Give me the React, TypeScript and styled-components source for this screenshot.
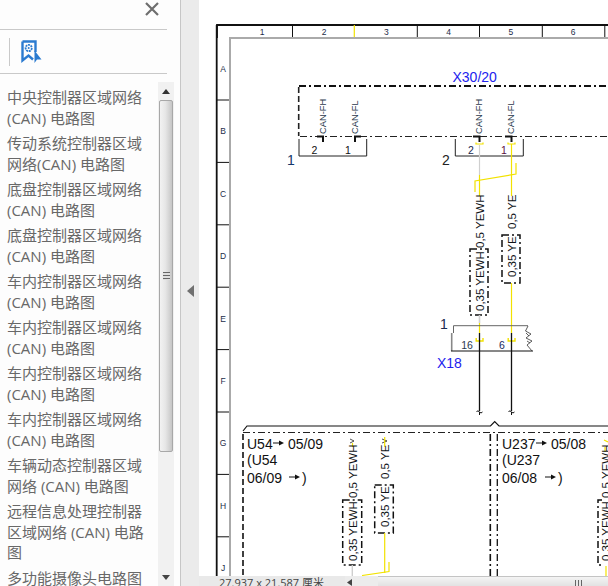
import React from "react";
import styled, { createGlobalStyle } from "styled-components";

const Global = createGlobalStyle`
  html, body { margin: 0; padding: 0; height: 100%; background: #fff; overflow: hidden; }
  #root { height: 100%; }
`;

const Shell = styled.div`
  display: flex;
  width: 608px;
  height: 586px;
  overflow: hidden;
  font-family: "Open Sans", "Noto Sans CJK SC", sans-serif;
`;

const Sidebar = styled.aside`
  width: 180px;
  flex: none;
  display: flex;
  flex-direction: column;
  background: #fdfdfd;
  border-right: 1px solid #c6c6c6;
`;

const CloseRow = styled.div`
  height: 30px;
  width: 167px;
  flex: none;
  box-sizing: border-box;
  border-bottom: 1px solid #c9c9c9;
  display: flex;
  justify-content: flex-end;
  align-items: flex-start;
  padding: 1px 8px 0 0;
  svg { margin-right: -1px; }
`;

const ToolRow = styled.div`
  height: 44px;
  width: 167px;
  flex: none;
  box-sizing: border-box;
  border-bottom: 1px solid #c9c9c9;
  display: flex;
  align-items: center;
  padding: 0 0 0 9px;
`;

const ToolDivider = styled.span`
  width: 1px;
  height: 28px;
  background: #c9c9c9;
  margin-right: 11px;
`;

const ListArea = styled.div`
  flex: 1;
  min-height: 0;
  display: flex;
  padding: 8px 6px 0 0;
`;

const List = styled.ul`
  list-style: none;
  margin: 0;
  padding: 5px 0 0 7px;
  width: 158px;
  flex: none;
  box-sizing: border-box;
  overflow: hidden;
`;

const Item = styled.li`
  font-size: 15px;
  line-height: 20.5px;
  color: #686868;
  margin-bottom: 5px;
  width: 145px;
`;

const ScrollTrack = styled.div`
  width: 16px;
  flex: none;
  background: #f1f1f1;
  display: flex;
  flex-direction: column;
  align-items: center;
`;

const ScrollCap = styled.div`
  height: 18px;
  flex: none;
  display: flex;
  align-items: center;
  justify-content: center;
`;

const ScrollThumb = styled.div`
  width: 14px;
  box-sizing: border-box;
  height: 352px;
  flex: none;
  border: 1px solid #a8a8a8;
  border-radius: 2px;
  background: linear-gradient(90deg, #f2f2f2 0%, #e6e6e6 45%, #c6c6c6 100%);
  display: flex;
  align-items: center;
  justify-content: center;
  margin-bottom: auto;
`;

const Grip = styled.span`
  width: 7px;
  height: 8px;
  background: repeating-linear-gradient(180deg, #666 0 1px, #ddd 1px 3px);
`;

const Gutter = styled.div`
  width: 18px;
  flex: none;
  background: #ebebeb;
  display: flex;
  align-items: center;
  justify-content: center;
  padding-bottom: 5px;
  box-sizing: border-box;
`;

const Viewer = styled.main`
  flex: 1;
  min-width: 0;
  display: flex;
  flex-direction: column;
`;

const Sheet = styled.svg`
  display: block;
  width: 409px;
  height: 576px;
  flex: none;
  background: #fff;
  font-family: "Liberation Sans", sans-serif;
`;

const StatusBar = styled.div`
  height: 10px;
  flex: none;
  display: flex;
  background: #e9e9e9;
  overflow: hidden;
`;

const Size = styled.span`
  width: 146px;
  flex: none;
  padding: 0 0 0 20px;
  box-sizing: border-box;
  font-size: 11px;
  line-height: 13px;
  color: #444;
  white-space: nowrap;
`;

const HBar = styled.div`
  flex: 1;
  display: flex;
  align-items: flex-start;
`;

const HArrow = styled.span`
  width: 33px;
  height: 10px;
  flex: none;
  background: #ececec;
  padding: 3px 0 0 2px;
  box-sizing: border-box;
  svg { display: block; }
`;

const HThumb = styled.div`
  flex: 1;
  height: 10px;
  box-sizing: border-box;
  border-top: 1px solid #c4c4c4;
  background: linear-gradient(180deg, #f4f4f4, #e2e2e2);
  display: flex;
  justify-content: flex-end;
  padding: 3px 26px 0 0;
`;

const HGrip = styled.span`
  width: 7px;
  height: 7px;
  background: repeating-linear-gradient(90deg, #666 0 1px, #e8e8e8 1px 3px);
`;

const Tick = styled.text`
  font-size: 8.5px;
  fill: #1c2c48;
  text-anchor: middle;
`;

const PinNo = styled.text<{ $c?: string }>`
  font-size: 10.5px;
  fill: ${(p) => p.$c ?? "#111"};
  text-anchor: middle;
`;

const BigNo = styled.text<{ $c?: string }>`
  font-size: 14px;
  fill: ${(p) => p.$c ?? "#14386a"};
  text-anchor: middle;
`;

const Tag = styled.text`
  font-size: 14px;
  fill: #2222ee;
`;

const Ref = styled.text`
  font-size: 14px;
  fill: #111;
`;

const Signal = styled.text`
  font-size: 9.3px;
  fill: #2c3a4e;
`;

const Wire = styled.text`
  font-size: 11.5px;
  fill: #101418;
`;

const sidebarItems = [
  "中央控制器区域网络 (CAN) 电路图",
  "传动系统控制器区域网络(CAN) 电路图",
  "底盘控制器区域网络 (CAN) 电路图",
  "底盘控制器区域网络 (CAN) 电路图",
  "车内控制器区域网络 (CAN) 电路图",
  "车内控制器区域网络 (CAN) 电路图",
  "车内控制器区域网络 (CAN) 电路图",
  "车内控制器区域网络 (CAN) 电路图",
  "车辆动态控制器区域网络 (CAN) 电路图",
  "远程信息处理控制器区域网络 (CAN) 电路图",
  "多功能摄像头电路图",
];

const columns = ["1", "2", "3", "4", "5", "6"];
const rows = ["A", "B", "C", "D", "E", "F", "G", "H", "J"];
const DD = "7 3 2 3";

const RotLabel = ({ x, y, text, small }: { x: number; y: number; text: string; small?: boolean }) =>
  small ? (
    <Signal transform={`translate(${x} ${y}) rotate(-90)`}>{text}</Signal>
  ) : (
    <Wire transform={`translate(${x} ${y}) rotate(-90)`}>{text}</Wire>
  );

const WireBox = ({ x, y, w, h }: { x: number; y: number; w: number; h: number }) => (
  <rect x={x} y={y} width={w} height={h} fill="#fff" stroke="#111" strokeWidth="1.5" strokeDasharray={DD} />
);

const Arrow = ({ x, y }: { x: number; y: number }) => (
  <g>
    <line x1={x} y1={y} x2={x + 8} y2={y} stroke="#111" strokeWidth="1" />
    <path d={`M${x + 6} ${y - 2.5}L${x + 11} ${y}L${x + 6} ${y + 2.5}Z`} fill="#111" />
  </g>
);

const Drawing = () => (
  <Sheet viewBox="199 0 409 576">
    {/* frame */}
    <path d="M217 38V25H608" fill="none" stroke="#111" strokeWidth="1.8" />
    <line x1="216.7" y1="25" x2="216.7" y2="576" stroke="#111" strokeWidth="1.8" />
    <path d="M230 576V38H608" fill="none" stroke="#aaa" strokeWidth="2" />
    {[292.5, 417.3, 479.5, 542.3, 604.8].map((x) => (
      <line key={x} x1={x} y1="25" x2={x} y2="37" stroke="#111" />
    ))}
    <line x1="354.3" y1="25" x2="354.3" y2="37" stroke="#f2e200" strokeWidth="1.2" />
    {columns.map((c, i) => (
      <Tick key={c} x={262 + i * 62.2} y="35">{c}</Tick>
    ))}
    {[100, 162.4, 224.8, 287.2, 349.6, 412, 474.4, 536.8].map((y) => (
      <line key={y} x1="217" y1={y} x2="229" y2={y} stroke="#111" />
    ))}
    {rows.map((r, i) => (
      <Tick key={r} x="223" y={72 + i * 62.4}>{r}</Tick>
    ))}

    {/* X30/20 module */}
    <Tag x="452.5" y="82">X30/20</Tag>
    <line x1="299" y1="86" x2="608" y2="86" stroke="#111" strokeWidth="2" strokeDasharray={DD} />
    <line x1="298.7" y1="87" x2="298.7" y2="136" stroke="#222" strokeWidth="1.6" strokeDasharray="6 3" />
    <line x1="300" y1="136.5" x2="608" y2="136.5" stroke="#222" strokeWidth="1.2" strokeDasharray={DD} />
    <RotLabel x={326} y={134} text="CAN-FH" small />
    <RotLabel x={358} y={134} text="CAN-FL" small />
    <RotLabel x={482} y={134} text="CAN-FH" small />
    <RotLabel x={514} y={134} text="CAN-FL" small />
    <path d="M299 139V156H366.7V139" fill="none" stroke="#222" strokeWidth="1" />
    <path d="M455.3 139V156H523.3V139" fill="none" stroke="#222" strokeWidth="1" />
    <path d="M317 136.5H323V142M355 142V136.5H361" fill="none" stroke="#111" strokeWidth="2" />
    <path d="M473 136.5H479.5V142M505 136.5H511.5V142" fill="none" stroke="#111" strokeWidth="2" />
    <PinNo x="314.5" y="154">2</PinNo>
    <PinNo x="348" y="154">1</PinNo>
    <PinNo x="471" y="154" $c="#1a2a50">2</PinNo>
    <PinNo x="504" y="154" $c="#5a1040">1</PinNo>
    <BigNo x="291" y="165">1</BigNo>
    <BigNo x="446" y="165" $c="#222">2</BigNo>

    {/* wires to X18 */}
    <path d="M476 142.5V144H483V142.5M508 142.5V144H515V142.5" fill="none" stroke="#f2e200" strokeWidth="1.2" />
    <line x1="479.5" y1="145" x2="479.5" y2="175" stroke="#cfcfcf" strokeWidth="1.2" />
    <line x1="479.5" y1="175" x2="479.5" y2="196" stroke="#f2e200" strokeWidth="1.2" />
    <line x1="511.5" y1="144" x2="511.5" y2="196" stroke="#f2e200" strokeWidth="1.2" />
    <path d="M516 163V174L475 181V192" fill="none" stroke="#f2e200" strokeWidth="1.2" />
    <RotLabel x={484} y={248} text="0,5 YEWH" />
    <RotLabel x={516} y={229} text="0,5 YE" />
    <WireBox x={470} y={249} w={18} h={66} />
    <WireBox x={502} y={235} w={18} h={48} />
    <RotLabel x={484} y={311} text="0,35 YEWH" />
    <RotLabel x={516} y={277} text="0,35 YE" />
    <line x1="479.5" y1="315" x2="479.5" y2="323" stroke="#cfcfcf" strokeWidth="1.6" />
    <line x1="479.5" y1="323" x2="479.5" y2="333" stroke="#f2e200" strokeWidth="1.2" />
    <line x1="511.5" y1="283" x2="511.5" y2="333" stroke="#f2e200" strokeWidth="1.2" />

    {/* X18 connector */}
    <path d="M453.5 333V325.7H528" fill="none" stroke="#666" strokeWidth="1" />
    <line x1="451.7" y1="333" x2="451.7" y2="351" stroke="#888" strokeWidth="1.6" />
    <line x1="451" y1="351" x2="533" y2="351" stroke="#111" strokeWidth="1" />
    <path
      d="M528 326L525.5 331L531 334L526 338L532 341L527 345L532 351M526 333L529 336M527 341L530 343"
      fill="none"
      stroke="#333"
      strokeWidth="0.8"
    />
    <BigNo x="444" y="329" $c="#1a2a50">1</BigNo>
    <PinNo x="467" y="349" $c="#2a3a50">16</PinNo>
    <PinNo x="502" y="349" $c="#1a2a60">6</PinNo>
    <Tag x="437" y="368">X18</Tag>
    <path d="M476.2 338V341H483V338M508.2 338V341H515V338" fill="none" stroke="#f2e200" strokeWidth="1.4" />
    <path d="M479.5 333V411M511.5 333V411" fill="none" stroke="#111" strokeWidth="1.3" />
    <path d="M476.5 411.5Q478 410 479.5 412T482.5 412M508.5 411.5Q510 410 511.5 412T514.5 412" fill="none" stroke="#111" />
    <line x1="479.5" y1="412" x2="479.5" y2="415" stroke="#111" />
    <line x1="511.5" y1="412" x2="511.5" y2="415" stroke="#111" />

    {/* lower module */}
    <path d="M243 431L247 426H490.5L494.7 421.5L499 426H608" fill="none" stroke="#111" strokeWidth="1.2" />
    <line x1="243" y1="432.5" x2="608" y2="432.5" stroke="#222" strokeWidth="1.2" strokeDasharray={DD} />
    <line x1="243" y1="434" x2="243" y2="576" stroke="#111" strokeWidth="1.6" strokeDasharray="6 3" />
    <line x1="490.3" y1="434" x2="490.3" y2="576" stroke="#111" strokeWidth="1.6" strokeDasharray={DD} />
    <line x1="497.3" y1="434" x2="497.3" y2="576" stroke="#111" strokeWidth="1.3" strokeDasharray={DD} />

    <Ref x="247" y="449">U54</Ref>
    <Arrow x={273} y={443} />
    <Ref x="288" y="449">05/09</Ref>
    <Ref x="247" y="465">(U54</Ref>
    <Ref x="247" y="483">06/09</Ref>
    <Arrow x={289} y={477} />
    <Ref x="302" y="483">)</Ref>

    <Ref x="502" y="449">U237</Ref>
    <Arrow x={536} y={443} />
    <Ref x="551" y="449">05/08</Ref>
    <Ref x="502" y="465">(U237</Ref>
    <Ref x="502" y="483">06/08</Ref>
    <Arrow x={545} y={477} />
    <Ref x="558" y="483">)</Ref>

    <path d="M350 439L354 441L350 443M382 439L387 441L382 443" fill="none" stroke="#222" strokeWidth="0.8" />
    <line x1="352.5" y1="443" x2="352.5" y2="447" stroke="#f2e200" strokeWidth="1.2" />
    <line x1="384.7" y1="437" x2="384.7" y2="447" stroke="#f2e200" strokeWidth="1.2" />
    <RotLabel x={357} y={498} text="0,5 YEWH" />
    <RotLabel x={389} y={479} text="0,5 YE" />
    <WireBox x={342.7} y={500} w={19} h={65} />
    <WireBox x={374.7} y={485} w={18.6} h={48} />
    <RotLabel x={357} y={561} text="0,35 YEWH" />
    <RotLabel x={389} y={527} text="0,35 YE" />
    <line x1="352.3" y1="565" x2="352.3" y2="576" stroke="#cfcfcf" strokeWidth="1.4" />
    <line x1="384.7" y1="533" x2="384.7" y2="573" stroke="#f2e200" strokeWidth="1.2" />
    <path d="M389 562V571.5L362 575.5" fill="none" stroke="#f2e200" strokeWidth="1.2" />

    <path d="M604 440L608 442M605 447V452" fill="none" stroke="#f2e200" strokeWidth="1.2" />
    <RotLabel x={610} y={498} text="0,5 YEWH" />
    <path d="M602 500H598V565H602" fill="none" stroke="#111" strokeWidth="1.5" strokeDasharray={DD} />
    <RotLabel x={610} y={561} text="0,35 YEWH" />
    <line x1="606" y1="566" x2="606" y2="576" stroke="#f2e200" strokeWidth="1.2" />
  </Sheet>
);

export default function App() {
  return (
    <>
      <Global />
      <Shell>
        <Sidebar>
          <CloseRow>
            <svg width="16" height="16" viewBox="0 0 16 16">
              <path d="M2 2L14 14M14 2L2 14" stroke="#6e6e6e" strokeWidth="2.2" fill="none" />
            </svg>
          </CloseRow>
          <ToolRow>
            <ToolDivider />
            <svg width="21" height="24" viewBox="0 0 21 24">
              <path d="M1.5 1.5H14.5V12M1.5 1.5V20.5L7.5 15.5L12 19.5" fill="none" stroke="#2b7bd0" strokeWidth="2.4" />
              <circle cx="7.7" cy="8" r="3.1" fill="none" stroke="#2b7bd0" strokeWidth="1.8" strokeDasharray="2 0.7" />
              <circle cx="7.7" cy="8" r="1" fill="#2b7bd0" />
              <path d="M13.5 10.5L20.5 19.5H16L13.5 23Z" fill="#2b7bd0" />
            </svg>
          </ToolRow>
          <ListArea>
            <List>
              {sidebarItems.map((t, i) => (
                <Item key={i}>{t}</Item>
              ))}
            </List>
            <ScrollTrack>
              <ScrollCap>
                <svg width="8" height="5" viewBox="0 0 8 5"><path d="M4 0L8 5H0Z" fill="#333" /></svg>
              </ScrollCap>
              <ScrollThumb>
                <Grip />
              </ScrollThumb>
              <ScrollCap>
                <svg width="8" height="5" viewBox="0 0 8 5"><path d="M4 5L8 0H0Z" fill="#444" /></svg>
              </ScrollCap>
            </ScrollTrack>
          </ListArea>
        </Sidebar>
        <Gutter>
          <svg width="7" height="12" viewBox="0 0 7 12"><path d="M7 0V12L0 6Z" fill="#707070" /></svg>
        </Gutter>
        <Viewer>
          <Drawing />
          <StatusBar>
            <Size>27.937 x 21.587 厘米</Size>
            <HBar>
              <HArrow>
                <svg width="5" height="7" viewBox="0 0 5 7"><path d="M5 0V7L0 3.5Z" fill="#444" /></svg>
              </HArrow>
              <HThumb>
                <HGrip />
              </HThumb>
            </HBar>
          </StatusBar>
        </Viewer>
      </Shell>
    </>
  );
}
